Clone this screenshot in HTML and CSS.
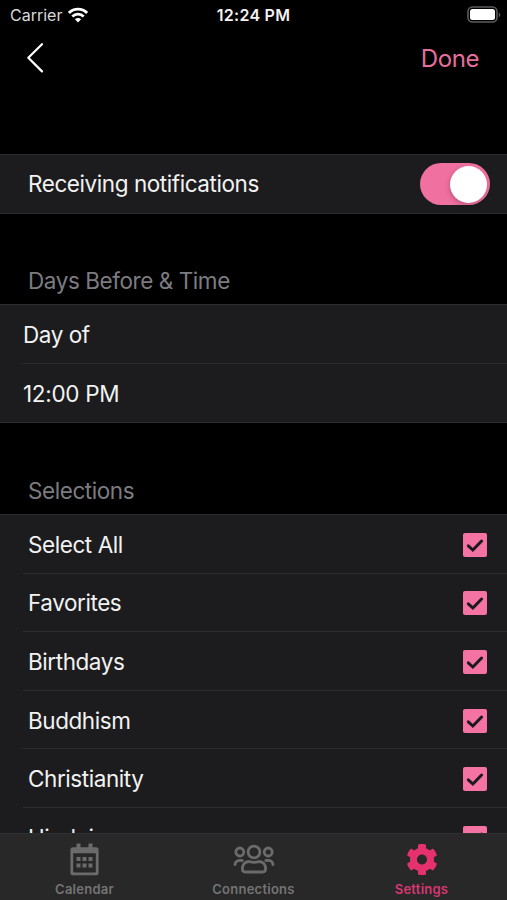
FILE: index.html
```html
<!DOCTYPE html>
<html lang="en">
<head>
    <meta charset="utf-8">
    <meta name="viewport" content="width=device-width, initial-scale=1">
    <title>Notifications</title>
    <link rel="stylesheet" href="styles.css">
</head>
<body>
    <svg class="defs" width="0" height="0">
        <symbol id="check" viewBox="0 0 24 24">
            <rect width="24" height="24" rx="2" fill="#f573a2"/>
            <path d="M5.300 12.800l4.600 4.200L18.600 8" fill="none" stroke="#1b1b1d" stroke-width="3" stroke-linecap="round" stroke-linejoin="miter"/>
        </symbol>
    </svg>
    <div class="screen">
        <header class="status">
            <div class="carrier">
                <span>Carrier</span>
                <svg width="20" height="16" viewBox="0 0 20 16">
                    <g fill="none" stroke="#fff" stroke-width="2.800">
                        <path d="M.9 5.900a12.900 12.900 0 0 1 18.200 0"/>
                        <path d="M4.300 9.400a8.100 8.100 0 0 1 11.400 0"/>
                    </g>
                    <path d="M10 15.500l-3.100-3.200a4.400 4.400 0 0 1 6.200 0z" fill="#fff"/>
                </svg>
            </div>
            <span class="clock">12:24 PM</span>
            <svg class="battery" width="34" height="18" viewBox="0 0 34 18">
                <rect x="1" y="1" width="29" height="15" rx="4.500" fill="none" stroke="#5b5b5d" stroke-width="1.600"/>
                <rect x="3" y="3" width="25" height="11" rx="2.500" fill="#fff"/>
                <path d="M31.800 6.600v4.600q1.500-.8 1.500-2.300t-1.500-2.300z" fill="#5b5b5d"/>
            </svg>
        </header>
        <nav class="nav">
            <svg width="18" height="32" viewBox="0 0 18 32">
                <path d="M16 2.200L2.300 15.800 16 29.400" fill="none" stroke="#fff" stroke-width="2.200" stroke-linecap="round" stroke-linejoin="round"/>
            </svg>
            <span class="done">Done</span>
        </nav>

        <main class="content">
            <section class="group">
                <div class="row toggle-row">
                    <span>Receiving notifications</span>
                    <span class="toggle"></span>
                </div>
            </section>

            <h2>Days Before &amp; Time</h2>
            <section class="group schedule">
                <div class="row"><span>Day of</span></div>
                <div class="row"><span class="time">12:00 PM</span></div>
            </section>

            <h2 class="selections">Selections</h2>
            <section class="group choices">
                <div class="row"><span>Select All</span><svg class="box"><use href="#check"/></svg></div>
                <div class="row"><span>Favorites</span><svg class="box"><use href="#check"/></svg></div>
                <div class="row"><span>Birthdays</span><svg class="box"><use href="#check"/></svg></div>
                <div class="row"><span>Buddhism</span><svg class="box"><use href="#check"/></svg></div>
                <div class="row"><span>Christianity</span><svg class="box"><use href="#check"/></svg></div>
                <div class="row"><span>Hinduism</span><svg class="box"><use href="#check"/></svg></div>
            </section>
        </main>

        <footer class="tabs">
            <div class="tab">
                <svg width="30" height="33" viewBox="0 0 30 33">
                    <g fill="#6b6b6b">
                        <path d="M6.500 .5h4v5h-4zM18.500 .5h4v5h-4z"/>
                        <path fill-rule="evenodd" d="M3 4.300h23a2.600 2.600 0 0 1 2.600 2.600v22.800a2.600 2.600 0 0 1-2.600 2.600H3a2.600 2.600 0 0 1-2.600-2.600V6.900A2.600 2.600 0 0 1 3 4.300zM3.200 10.300v18.200q0 1 1 1h20.600q1 0 1-1V10.300z"/>
                        <path d="M6.500 14h4v4h-4zM12.500 14h4v4h-4zM18.500 14h4v4h-4zM6.500 20.500h4v4h-4zM12.500 20.500h4v4h-4zM18.500 20.500h4v4h-4z"/>
                    </g>
                </svg>
                <span>Calendar</span>
            </div>
            <div class="tab">
                <svg width="42" height="33" viewBox="0 0 42 33">
                    <g fill="none" stroke="#6b6b6b" stroke-width="2.800" stroke-linecap="round" stroke-linejoin="round">
                        <circle cx="21" cy="9" r="5.900"/>
                        <circle cx="6.800" cy="9" r="4"/>
                        <circle cx="35.200" cy="9" r="4"/>
                        <path d="M16 18.500q5 1.800 10 0c4.200 0 6.600 3.400 6.600 7.500 0 2-1 3-3 3H12.400c-2 0-3-1-3-3 0-4.100 2.400-7.500 6.600-7.500z"/>
                        <path d="M2 21.500c.3-3 2.300-4.600 7.200-4M40 21.500c-.3-3-2.300-4.600-7.200-4"/>
                    </g>
                </svg>
                <span>Connections</span>
            </div>
            <div class="tab active">
                <svg width="32" height="33" viewBox="0 -8 512 528">
                    <path fill="#e6316f" d="M487.400 315.700l-42.600-24.600c4.300-23.200 4.300-47 0-70.200l42.600-24.600c4.900-2.800 7.100-8.600 5.500-14-11.100-35.600-30-67.800-54.700-94.600-3.800-4.100-10-5.100-14.800-2.300L380.800 110c-17.900-15.400-38.500-27.300-60.800-35.100V25.800c0-5.600-3.900-10.500-9.400-11.700-36.700-8.200-74.300-7.800-109.200 0-5.500 1.200-9.400 6.100-9.400 11.700V75c-22.200 7.900-42.800 19.800-60.800 35.100L88.700 85.500c-4.900-2.800-11-1.900-14.800 2.300-24.700 26.700-43.600 58.900-54.700 94.600-1.700 5.400.6 11.200 5.500 14L67.300 221c-4.300 23.200-4.300 47 0 70.200l-42.600 24.600c-4.900 2.800-7.100 8.600-5.500 14 11.100 35.600 30 67.800 54.700 94.600 3.800 4.100 10 5.100 14.800 2.300l42.600-24.600c17.900 15.400 38.500 27.300 60.800 35.100v49.200c0 5.600 3.900 10.500 9.400 11.700 36.700 8.200 74.300 7.800 109.200 0 5.500-1.200 9.400-6.100 9.400-11.700v-49.200c22.200-7.900 42.800-19.800 60.800-35.100l42.600 24.600c4.900 2.800 11 1.900 14.800-2.300 24.700-26.700 43.600-58.900 54.700-94.600 1.500-5.500-.7-11.300-5.600-14.100zM256 336c-44.100 0-80-35.900-80-80s35.900-80 80-80 80 35.900 80 80-35.900 80-80 80z"/>
                </svg>
                <span>Settings</span>
            </div>
        </footer>
    </div>
</body>
</html>
```
FILE: styles.css
```css
* {
    box-sizing: border-box;
}
body {
    margin: 0;
    background: #000;
    color: #f2f2f2;
    font-family: Inter, "Liberation Sans", sans-serif;
    font-size: 22.5px;
    letter-spacing: -0.43px;
}
svg {
    display: block;
}
.defs {
    position: absolute;
}
.screen {
    display: flex;
    flex-direction: column;
    width: 507px;
    height: 900px;
    overflow: hidden;
    background: #000;
}
.status {
    display: grid;
    grid-template-columns: 1fr auto 1fr;
    align-items: center;
    height: 30px;
    padding: 0 6px 0 10px;
    font-size: 16px;
    letter-spacing: 0;
}
.carrier {
    display: flex;
    align-items: center;
    gap: 6px;
    color: #d8d8d8;
}
.clock {
    margin-right: 4px;
    font-weight: 600;
    letter-spacing: .25px;
}
.battery {
    justify-self: end;
}
.nav {
    display: flex;
    justify-content: space-between;
    align-items: center;
    height: 56px;
    padding: 0 28px 0 26px;
}
.done {
    color: #e66f9b;
    font-size: 24px;
}
.content {
    flex: 1;
    min-height: 0;
    padding-top: 68px;
    overflow: hidden;
}
.group {
    background: #1c1c1e;
    border-top: 1px solid #2d2d2f;
    border-bottom: 1px solid #2d2d2f;
}
.row {
    display: flex;
    justify-content: space-between;
    align-items: center;
    height: 58.6px;
    margin-left: 23px;
    padding: 2px 20px 0 5px;
}
.row > span:first-child {
    padding-bottom: 1px;
}
.row + .row {
    border-top: 1px solid #2d2d2f;
}
.toggle-row {
    height: 58px;
    padding-top: 0;
    padding-right: 17px;
}
.toggle {
    display: flex;
    justify-content: flex-end;
    width: 70px;
    height: 42px;
    padding: 3px;
    border-radius: 21px;
    background: #f0709f;
}
.toggle::before {
    content: "";
    width: 37px;
    height: 37px;
    border-radius: 50%;
    background: #fff;
    box-shadow: -1px 2px 5px rgba(0, 0, 0, .2);
}
h2 {
    display: flex;
    align-items: flex-end;
    height: 90px;
    margin: 0;
    padding: 0 28px 9px;
    color: #7c7c80;
    font-size: 22.5px;
    font-weight: 400;
    line-height: 28px;
}
.selections {
    height: 91px;
}
.schedule .row {
    height: 59px;
    padding-left: 0;
}
.schedule .row:first-child {
    height: 58px;
}
.time {
    letter-spacing: -.3px;
}
.choices .row:first-child {
    height: 57.6px;
}
.box {
    width: 24px;
    height: 24px;
}
.tabs {
    display: grid;
    grid-template-columns: 169px 169px 167px;
    height: 67px;
    border-top: 1px solid #303032;
    background: #282828;
}
.tab {
    display: flex;
    flex-direction: column;
    align-items: center;
    gap: 5px;
    padding-top: 9px;
    color: #747474;
    font-size: 13px;
    font-weight: 600;
    line-height: 17px;
    letter-spacing: .25px;
}
.active {
    color: #d93672;
}
```
